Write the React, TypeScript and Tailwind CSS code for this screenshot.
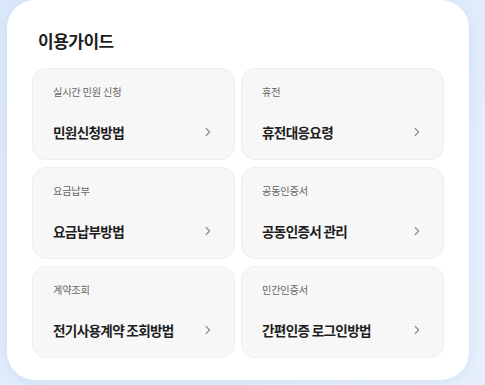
const guides = [
  { label: "실시간 민원 신청", title: "민원신청방법" },
  { label: "휴전", title: "휴전대응요령" },
  { label: "요금납부", title: "요금납부방법" },
  { label: "공동인증서", title: "공동인증서 관리" },
  { label: "계약조회", title: "전기사용계약 조회방법" },
  { label: "민간인증서", title: "간편인증 로그인방법" },
];

function Chevron() {
  return (
    <svg width="8" height="10" viewBox="0 0 8 10" fill="none" className="text-[#8f8f8f]">
      <path d="M2.2 1.5 L5.6 5 L2.2 8.5" stroke="currentColor" strokeWidth="1.2" strokeLinecap="round" strokeLinejoin="round" />
    </svg>
  );
}

export default function App() {
  return (
    <div
      className="w-[485px] h-[385px] bg-gradient-to-br from-[#dbe8fa] to-[#e6f0fc] pl-[7px] pr-[16px] pb-[5px] overflow-hidden"
      style={{ fontFamily: '"Noto Sans CJK KR", "Noto Sans", sans-serif' }}
    >
      <div className="h-[380px] bg-white rounded-[28px] shadow-[0_2px_12px_rgba(60,120,200,0.10)] px-[25px]">
        <h2 className="pt-[29px] pl-[6px] text-[17px] leading-[24px] font-bold tracking-[-0.03em] text-[#1e1e1e] mb-[15px]">
          이용가이드
        </h2>
        <div className="grid grid-cols-2 gap-x-[6px] gap-y-[7px]">
          {guides.map((g) => (
            <div
              key={g.title}
              className="h-[92px] rounded-[14px] bg-[#f7f7f7] border border-[#eeeeee] pl-[20px] pr-[22px] pt-[16px]"
            >
              <p className="text-[10.2px] leading-[14px] tracking-[-0.02em] text-[#666666]">{g.label}</p>
              <div className="mt-[23px] flex items-center justify-between">
                <span className="text-[13.6px] leading-[20px] font-bold tracking-[-0.05em] text-[#1e1e1e]">{g.title}</span>
                <Chevron />
              </div>
            </div>
          ))}
        </div>
      </div>
    </div>
  );
}
